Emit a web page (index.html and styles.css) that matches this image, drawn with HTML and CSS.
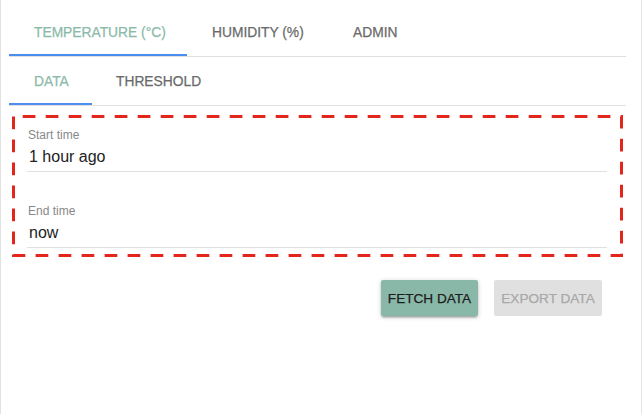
FILE: index.html
```html
<!DOCTYPE html>
<html>
<head>
<meta charset="utf-8">
<link rel="stylesheet" href="styles.css">
</head>
<body>
<div class="panel">
  <div class="tabs tabs-main">
    <div class="tab tab-temp active">TEMPERATURE (°C)</div>
    <div class="tab tab-hum">HUMIDITY (%)</div>
    <div class="tab">ADMIN</div>
  </div>
  <div class="tabs tabs-sub">
    <div class="tab tab-data active">DATA</div>
    <div class="tab">THRESHOLD</div>
  </div>
  <div class="range">
    <svg class="outline" width="611" height="142" viewBox="0 0 611 142">
      <rect x="1.5" y="1.5" width="608" height="139" fill="none" stroke="#e3261b" stroke-width="3" stroke-dasharray="12.7 10.3" stroke-dashoffset="13.8"/>
    </svg>
    <div class="field">
      <div class="label">Start time</div>
      <div class="value">1 hour ago</div>
    </div>
    <div class="field">
      <div class="label">End time</div>
      <div class="value">now</div>
    </div>
  </div>
  <div class="actions">
    <button class="btn btn-primary">FETCH DATA</button>
    <button class="btn btn-disabled">EXPORT DATA</button>
  </div>
</div>
</body>
</html>
```

FILE: styles.css
```css
html, body {
  margin: 0;
  padding: 0;
  background: #ffffff;
}
body {
  font-family: "Liberation Sans", Arial, Helvetica, sans-serif;
}
.panel {
  box-sizing: border-box;
  width: 642px;
  min-height: 414px;
  border-left: 1px solid #e2e2e2;
  border-right: 1px solid #e6e6e6;
  padding: 8px 15px 0 8px;
}
.tabs {
  display: flex;
  border-bottom: 1px solid #e0e0e0;
}
.tab {
  height: 48px;
  box-sizing: border-box;
  padding: 2px 24px 0 25px;
  display: flex;
  align-items: center;
  font-size: 13.8px;
  color: #6a6a6a;
  -webkit-text-stroke: 0.25px currentColor;
  border-bottom: 2px solid transparent;
  white-space: nowrap;
  flex: none;
}
.tab.active {
  color: #8bbaa9;
  border-bottom-color: #4a8ef0;
}
.tabs-sub .tab {
  padding-top: 3px;
}
.tab-temp {
  width: 178px;
}
.tab-hum {
  width: 141px;
}
.tab-data {
  width: 83px;
}
.tabs-sub .tab:nth-child(2) {
  padding-left: 24px;
}
.range {
  position: relative;
  box-sizing: border-box;
  width: 611px;
  height: 142px;
  margin: 9px 3px 0 3px;
  padding: 13px 16px 0 15px;
  display: flex;
  flex-direction: column;
  gap: 32px;
}
.outline {
  position: absolute;
  left: 0;
  top: 0;
}
.field {
  display: flex;
  flex-direction: column;
}
.label {
  font-size: 12px;
  line-height: 14px;
  color: #888888;
  padding-left: 1px;
}
.value {
  font-size: 16px;
  line-height: 19px;
  color: #222222;
  padding: 5px 0 5px 2px;
  border-bottom: 1px solid #e0e0e0;
}
.actions {
  display: flex;
  justify-content: flex-end;
  gap: 16px;
  margin-top: 23px;
  padding-right: 24px;
}
.btn {
  font-family: "Liberation Sans", Arial, Helvetica, sans-serif;
  font-size: 13.6px;
  height: 36px;
  border: none;
  border-radius: 2px;
  padding: 0 4px;
  margin: 0;
  -webkit-text-stroke: 0.25px currentColor;
}
.btn-primary {
  width: 97px;
  background: #8ab8a8;
  color: #1c1c1c;
  box-shadow: 0 1px 5px rgba(0,0,0,0.2), 0 2px 2px rgba(0,0,0,0.14), 0 3px 1px -2px rgba(0,0,0,0.12);
}
.btn-disabled {
  width: 108px;
  background: #e0e0e0;
  color: #a8a8a8;
}
```
